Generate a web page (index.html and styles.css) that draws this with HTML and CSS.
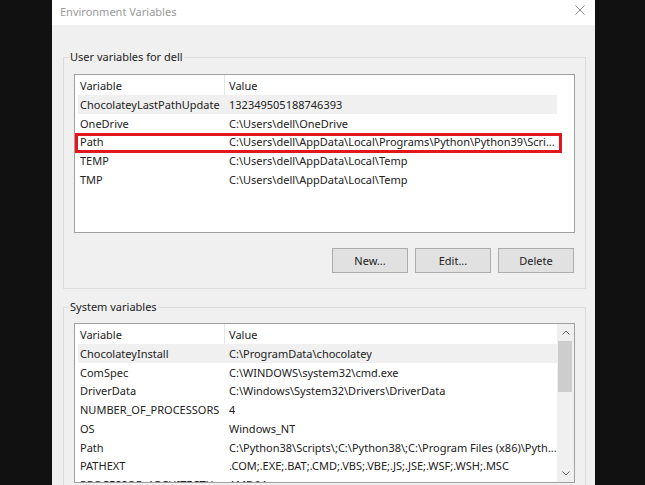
FILE: index.html
```html
<!DOCTYPE html>
<html>
<head>
<meta charset="utf-8">
<link rel="stylesheet" href="styles.css">
</head>
<body>
<div class="dialog">
  <div class="titlebar">
    <span class="title">Environment Variables</span>
    <svg class="close" viewBox="0 0 10 10" width="10" height="10"><path d="M0.5 0.5 L9.5 9.5 M9.5 0.5 L0.5 9.5" stroke="#8a8a8a" stroke-width="1" fill="none"/></svg>
  </div>
  <div class="content">
    <div class="group">
      <span class="legend">User variables for dell</span>
      <div class="list">
        <div class="rows">
          <div class="row head"><span class="c1">Variable</span><span class="c2">Value</span></div>
          <div class="row hl"><span class="c1">ChocolateyLastPathUpdate</span><span class="c2">132349505188746393</span></div>
          <div class="row"><span class="c1">OneDrive</span><span class="c2">C:\Users\dell\OneDrive</span></div>
          <div class="row marked"><span class="c1">Path</span><span class="c2">C:\Users\dell\AppData\Local\Programs\Python\Python39\Scri...</span></div>
          <div class="row"><span class="c1">TEMP</span><span class="c2">C:\Users\dell\AppData\Local\Temp</span></div>
          <div class="row"><span class="c1">TMP</span><span class="c2">C:\Users\dell\AppData\Local\Temp</span></div>
        </div>
      </div>
      <div class="buttons">
        <button class="btn">New...</button>
        <button class="btn">Edit...</button>
        <button class="btn">Delete</button>
      </div>
    </div>
    <div class="group system">
      <span class="legend">System variables</span>
      <div class="list">
        <div class="rows">
          <div class="row head"><span class="c1">Variable</span><span class="c2">Value</span></div>
          <div class="row hl"><span class="c1">ChocolateyInstall</span><span class="c2">C:\ProgramData\chocolatey</span></div>
          <div class="row"><span class="c1">ComSpec</span><span class="c2">C:\WINDOWS\system32\cmd.exe</span></div>
          <div class="row"><span class="c1">DriverData</span><span class="c2">C:\Windows\System32\Drivers\DriverData</span></div>
          <div class="row"><span class="c1">NUMBER_OF_PROCESSORS</span><span class="c2">4</span></div>
          <div class="row"><span class="c1">OS</span><span class="c2">Windows_NT</span></div>
          <div class="row"><span class="c1">Path</span><span class="c2">C:\Python38\Scripts\;C:\Python38\;C:\Program Files (x86)\Pyth...</span></div>
          <div class="row"><span class="c1">PATHEXT</span><span class="c2">.COM;.EXE;.BAT;.CMD;.VBS;.VBE;.JS;.JSE;.WSF;.WSH;.MSC</span></div>
          <div class="row"><span class="c1">PROCESSOR_ARCHITECTU...</span><span class="c2">AMD64</span></div>
        </div>
        <div class="scrollbar">
          <div class="arrow"><svg viewBox="0 0 8 5" width="8" height="5"><polyline points="0.5,4.5 4,1 7.5,4.5" stroke="#606060" stroke-width="1" fill="none"/></svg></div>
          <div class="thumb"></div>
          <div class="track"></div>
          <div class="arrow"><svg viewBox="0 0 8 5" width="8" height="5"><polyline points="0.5,0.5 4,4 7.5,0.5" stroke="#606060" stroke-width="1" fill="none"/></svg></div>
        </div>
      </div>
    </div>
  </div>
</div>
</body>
</html>
```
FILE: styles.css
```css
html, body {
  margin: 0;
  padding: 0;
  background: #111111;
}
body {
  font-family: "Noto Sans", "Open Sans", sans-serif;
  font-size: 11px;
  color: #222222;
  height: 485px;
  overflow: hidden;
}
.dialog {
  margin-left: 52px;
  width: 543px;
  height: 485px;
  background: #f0f0f0;
  overflow: hidden;
}
.titlebar {
  height: 25px;
  background: #ffffff;
  display: flex;
  align-items: center;
  justify-content: space-between;
  padding: 0 10px 2px 8px;
  box-sizing: border-box;
}
.title {
  color: #9a9a9a;
  font-size: 11px;
}
.close {
  display: block;
  align-self: flex-start;
  margin-top: 5px;
}
.content {
  padding: 32px 9px 0 11px;
}
.group {
  position: relative;
  border: 1px solid #dcdcdc;
  padding: 16px 10px 15px 10px;
}
.group.system {
  margin-top: 18px;
  padding-top: 15px;
}
.legend {
  position: absolute;
  left: 5px;
  top: -9px;
  padding: 0 1px;
  line-height: 16px;
  background: #f0f0f0;
  white-space: nowrap;
}
.list {
  border: 1px solid #a0a0a0;
  background: #ffffff;
  height: 159px;
  box-sizing: border-box;
  display: flex;
  overflow: hidden;
}
.system .list {
  height: 160px;
}
.rows {
  width: 482px;
  flex: none;
}
.row {
  display: flex;
  height: 18.75px;
  align-items: center;
  white-space: nowrap;
}
.row.head {
  height: 20px;
  align-items: stretch;
}
.c1 {
  width: 150px;
  flex: none;
  padding-left: 5px;
  box-sizing: border-box;
  overflow: hidden;
}
.c2 {
  padding-left: 4px;
  overflow: hidden;
}
.head .c1,
.head .c2 {
  display: flex;
  align-items: center;
}
.head .c1 {
  border-right: 1px solid #e5e5e5;
}
.row.hl {
  background: linear-gradient(to right, transparent 3px, #f0f0f0 3px);
}
.row.marked {
  position: relative;
}
.row.marked::after {
  content: "";
  position: absolute;
  left: 0;
  top: 0;
  width: 487px;
  height: 20px;
  border: 3px solid #e3151d;
  box-sizing: border-box;
}
.buttons {
  display: flex;
  justify-content: flex-end;
  gap: 7px;
  margin-top: 15px;
  padding-right: 1px;
}
.btn {
  width: 76px;
  height: 25px;
  padding: 0;
  background: #e1e1e1;
  border: 1px solid #adadad;
  font-family: inherit;
  font-size: 11px;
  color: #222222;
}
.scrollbar {
  width: 17px;
  flex: none;
  background: #f0f0f0;
  display: flex;
  flex-direction: column;
}
.arrow {
  height: 17px;
  display: flex;
  align-items: center;
  justify-content: center;
}
.arrow svg {
  display: block;
}
.thumb {
  height: 51px;
  margin: 0 2px 0 1px;
  background: #cdcdcd;
}
.track {
  flex: 1;
}
```
